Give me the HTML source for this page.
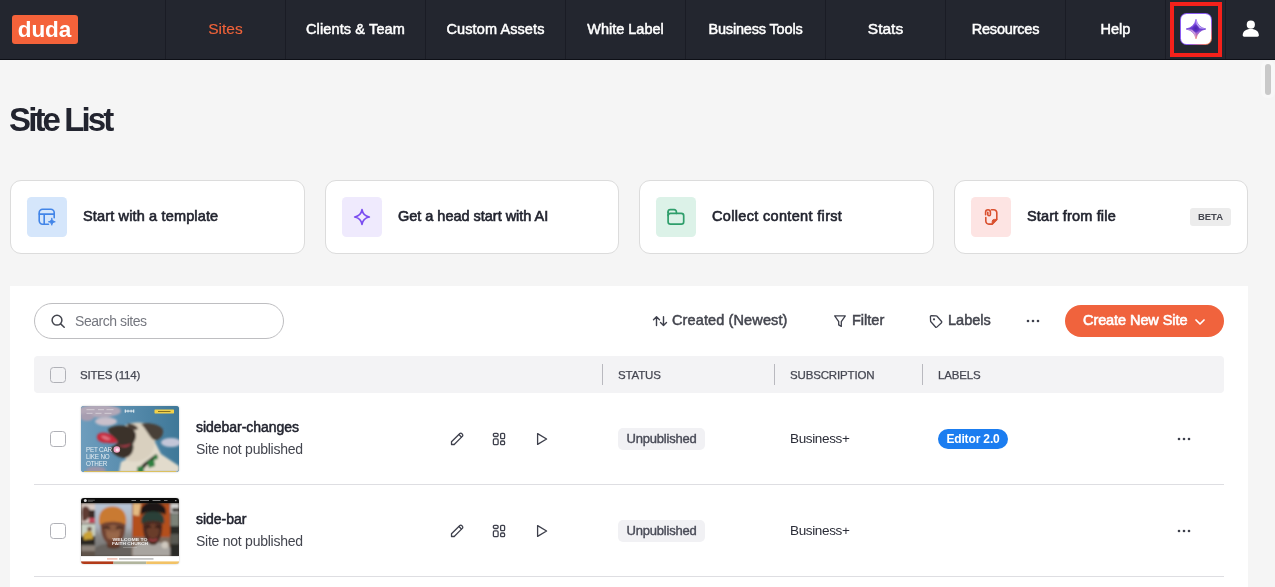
<!DOCTYPE html>
<html lang="en">
<head>
<meta charset="utf-8">
<title>Site List</title>
<style>
*{box-sizing:border-box;margin:0;padding:0}
html,body{width:1275px;height:587px;overflow:hidden;background:#f5f5f5;font-family:"Liberation Sans",sans-serif;color:#22242f}
.ni,.tx,h1,.logo,.beta,.search span,.tb,.create,.th,.name,.sub,.badge,.plan,.ed{will-change:transform}
/* NAV */
#nav{position:absolute;left:0;top:0;width:1275px;height:60px;background:#23262f;border-bottom:1px solid #0d0f16}
.logo{position:absolute;left:12px;top:15px;width:66px;height:29px;background:#f4623a;border-radius:3px;color:#fff;font-weight:bold;font-size:22.5px;line-height:29.5px;text-align:center;letter-spacing:-.1px;text-indent:-1px}
.nd{position:absolute;top:0;width:1px;height:59px;background:#1a1c25}
.ni{position:absolute;top:0;height:59px;line-height:58.600px;text-align:center;color:#fff;font-size:14.5px;font-weight:normal;-webkit-text-stroke:.5px #fff;white-space:nowrap}
.ni.act{color:#f0633a;font-weight:normal;font-size:15.500px;-webkit-text-stroke:.15px #f0633a;line-height:58.200px}
.redbox{position:absolute;left:1170px;top:2px;width:52px;height:55px;border:4px solid #f5211b}
.aibtn{position:absolute;left:1180.300px;top:13.200px;width:31.400px;height:31.600px;border-radius:6.500px;background:linear-gradient(135deg,#8b5cf2 0%,#8b5cf2 62%,#f07e5a 92%)}.aibtn i{position:absolute;left:1px;top:1px;right:1px;bottom:1px;background:#fff;border-radius:5.500px}
/* TITLE */
h1{position:absolute;left:9.2px;top:100.7px;font-size:33px;line-height:38px;font-weight:bold;letter-spacing:-2.88px;color:#22242f;white-space:nowrap}
/* CARDS */
.card{position:absolute;top:180px;height:74px;width:295px;background:#fff;border:1px solid #dcdcdc;border-radius:11px}
.card .ic{position:absolute;left:16px;top:16px;width:40px;height:40px;border-radius:4.500px}
.card .tx{position:absolute;left:72px;top:0;line-height:70.400px;font-size:14.500px;font-weight:normal;-webkit-text-stroke:.6px #22242f;color:#22242f;white-space:nowrap}
.beta{position:absolute;left:235px;top:27px;width:41px;height:18px;background:#ececec;border-radius:3px;font-size:9.500px;font-weight:bold;line-height:17.300px;text-align:center;color:#44464f}
/* PANEL */
#panel{position:absolute;left:10px;top:286px;width:1238px;height:310px;background:#fff}
.search{position:absolute;left:34px;top:303px;width:250px;height:36px;border:1px solid #bebec1;border-radius:18px;background:#fff}
.search span{position:absolute;left:40px;top:0;line-height:35px;font-size:14px;letter-spacing:-.45px;color:#75777f;white-space:nowrap}
.tb{position:absolute;top:305px;height:32px;line-height:31px;font-size:14.5px;color:#44464f;-webkit-text-stroke:.5px #44464f;white-space:nowrap}
.create{position:absolute;left:1065px;top:305px;width:159px;height:32px;border-radius:16px;background:#f0633d;color:#fff;font-size:14.500px;font-weight:normal;-webkit-text-stroke:.6px #fff;line-height:31px;letter-spacing:-.08px;white-space:nowrap}
.create span{position:absolute;left:18px;top:-.1px}
.thead{position:absolute;left:34px;top:356px;width:1190px;height:37px;background:#f3f3f5;border-radius:4px}
.th{position:absolute;top:356px;height:36px;line-height:38px;font-size:11.5px;letter-spacing:-.15px;color:#454752;-webkit-text-stroke:.25px #454752;white-space:nowrap}
.vd{position:absolute;top:364px;width:1px;height:21px;background:#b9b9bf}
.cb{position:absolute;left:50px;width:16px;height:16px;border:1px solid #b0b1b7;border-radius:3.500px;background:#fff}
.rowline{position:absolute;left:34px;width:1190px;height:1px;background:#dedee2}
.thumb{will-change:transform;position:absolute;left:81px;width:98px;height:66px;border-radius:3px;overflow:hidden;box-shadow:0 0 2px rgba(0,0,0,.25)}
.name{position:absolute;left:196px;font-size:14px;letter-spacing:-.03px;font-weight:normal;-webkit-text-stroke:.5px #22242f;color:#22242f;white-space:nowrap;line-height:18px}
.sub{position:absolute;left:196px;font-size:14px;letter-spacing:-.25px;color:#44464f;white-space:nowrap;line-height:18px}
.badge{position:absolute;left:618px;width:87px;height:22px;background:#f1f1f4;border-radius:5px;font-size:13px;font-weight:normal;-webkit-text-stroke:.4px #4a4c58;color:#4a4c58;text-align:center;line-height:21.800px;letter-spacing:-.2px;white-space:nowrap}
.plan{position:absolute;left:790px;font-size:13.5px;letter-spacing:-.35px;color:#2a2c37;line-height:18px;white-space:nowrap}
.ed{position:absolute;left:938px;width:70px;height:20px;border-radius:10px;background:#1b7df0;color:#fff;font-size:12px;font-weight:bold;text-align:center;line-height:20px;letter-spacing:-.15px;white-space:nowrap}
svg{position:absolute;overflow:visible}
.scroll{position:absolute;left:1265px;top:64px;width:6px;height:31px;border-radius:3px;background:#c9c9c9}
</style>
</head>
<body>
<div id="nav">
  <div class="logo">duda</div>
  <div class="nd" style="left:165px"></div>
  <div class="nd" style="left:285px"></div>
  <div class="nd" style="left:425px"></div>
  <div class="nd" style="left:565px"></div>
  <div class="nd" style="left:685px"></div>
  <div class="nd" style="left:825px"></div>
  <div class="nd" style="left:945px"></div>
  <div class="nd" style="left:1065px"></div>
  <div class="nd" style="left:1165px"></div>
  <div class="nd" style="left:1225px"></div>
  <div class="ni act" style="left:166px;width:119px">Sites</div>
  <div class="ni" style="left:286px;width:139px;letter-spacing:.13px">Clients &amp; Team</div>
  <div class="ni" style="left:426px;width:139px;letter-spacing:.1px">Custom Assets</div>
  <div class="ni" style="left:566px;width:119px">White Label</div>
  <div class="ni" style="left:686px;width:139px;letter-spacing:-.17px">Business Tools</div>
  <div class="ni" style="left:826px;width:119px;font-size:15.500px;line-height:58px">Stats</div>
  <div class="ni" style="left:946px;width:119px;letter-spacing:-.2px">Resources</div>
  <div class="ni" style="left:1066px;width:99px">Help</div>
  <div class="redbox"></div>
  <div class="aibtn"><i></i>
    <svg width="20" height="20" viewBox="0 0 20 20" style="left:5.600px;top:5.600px"><defs><linearGradient id="g1" x1="0" y1="0" x2="0" y2="1"><stop offset="0" stop-color="#9a6af5"/><stop offset=".5" stop-color="#6a3ad2"/><stop offset=".68" stop-color="#9a62d8"/><stop offset="1" stop-color="#f58472"/></linearGradient><radialGradient id="g2" cx=".5" cy=".5" r=".5"><stop offset="0" stop-color="#4a22b0"/><stop offset=".6" stop-color="#5a2dc0" stop-opacity=".8"/><stop offset="1" stop-color="#5a2dc0" stop-opacity="0"/></radialGradient></defs><path d="M10 .2Q11.600 8.400 19.800 10Q11.600 11.600 10 19.800Q8.400 11.600 .2 10Q8.400 8.400 10 .2Z" fill="url(#g1)" stroke="url(#g1)" stroke-width=".8" stroke-linejoin="round"/><path d="M10 .2Q11.600 8.400 19.800 10L12.500 9.200L10.600 6Z" fill="#cbb6fa" opacity=".9"/><path d="M.2 10Q8.400 11.600 10 19.800L9.300 13L7 10.800Z" fill="#d9b0e4" opacity=".75"/><path d="M10 4.500L14.500 10L10 14.500L5 10Z" fill="url(#g2)"/></svg>
  </div>
  <svg width="18" height="18" viewBox="0 0 18 18" style="left:1242px;top:20px"><circle cx="8.800" cy="4.700" r="4.100" fill="#fff"/><path d="M.700 15.300C.700 11.200 3.800 8.900 8.800 8.900s8.100 2.300 8.100 6.400c0 .9-.600 1.400-1.500 1.400H2.200c-.900 0-1.500-.500-1.500-1.400z" fill="#fff"/></svg>
</div>
<div style="position:absolute;left:1261px;top:61px;width:14px;height:37px;border-radius:6px;background:#f8f8f8"></div><div class="scroll"></div>

<h1>Site List</h1>

<div class="card" style="left:10px"><div class="ic" style="background:#d5e6fb"><svg width="40" height="40" viewBox="0 0 40 40" style="left:0;top:0" fill="none" stroke="#4285e8" stroke-width="1.6" stroke-linecap="round" stroke-linejoin="round"><path d="M21.5 27.2H15.6a3.4 3.4 0 0 1-3.4-3.4V15.6a3.4 3.4 0 0 1 3.4-3.4h8.2a3.4 3.4 0 0 1 3.4 3.4v5.2"/><path d="M12.2 17.100H27.2M17.2 17.100V27.2"/><path d="M24.8 21.3c.3 2 1.400 3.100 3.500 3.500c-2.100 .4-3.200 1.500-3.500 3.500c-.3-2-1.400-3.100-3.500-3.500c2.100-.4 3.200-1.500 3.500-3.500z" fill="#4285e8" stroke-width=".8"/></svg></div><div class="tx" style="letter-spacing:.15px">Start with a template</div></div>
<div class="card" style="left:325px;width:294px"><div class="ic" style="background:#efeafd"><svg width="40" height="40" viewBox="0 0 40 40" style="left:0;top:0" fill="none" stroke="#7a4cf0" stroke-width="1.7" stroke-linejoin="round"><path d="M20 12.700c.7 4.300 2.700 6.400 7.300 7.300c-4.600 .9-6.600 3-7.300 7.300c-.7-4.300-2.700-6.400-7.300-7.300c4.600-.9 6.600-3 7.300-7.300z"/></svg></div><div class="tx" style="letter-spacing:-.02px">Get a head start with AI</div></div>
<div class="card" style="left:639px"><div class="ic" style="background:#dcf2e8"><svg width="40" height="40" viewBox="0 0 40 40" style="left:0;top:0" fill="none" stroke="#2e9e6b" stroke-width="1.7" stroke-linejoin="round" stroke-linecap="round"><path d="M12.100 15.200v-.3a2.200 2.200 0 0 1 2.200-2.200h3.900a2.200 2.200 0 0 1 2.200 2.200v1.400"/><rect x="12.100" y="16.300" width="15.600" height="10.900" rx="2.400"/><path d="M12.100 18.500V15"/></svg></div><div class="tx" style="letter-spacing:.33px">Collect content first</div></div>
<div class="card" style="left:954px;width:294px"><div class="ic" style="background:#fde4e3"><svg width="40" height="40" viewBox="0 0 40 40" style="left:0;top:0" fill="none" stroke="#d9502f" stroke-width="1.6" stroke-linejoin="round" stroke-linecap="round"><path d="M20.500 12.700h2.300a3 3 0 0 1 3 3v6.800l-4.600 4.600h-3.400a3 3 0 0 1-3-3v-3.600"/><path d="M25.600 22.400h-2.200a2.200 2.200 0 0 0-2.200 2.200v2.300z" fill="#d9502f" stroke-width="1"/><path d="M14.600 17.800v-2.600a2.400 2.400 0 0 1 4.800 0v2.200a1.300 1.300 0 0 1-2.600 0v-2.200"/></svg></div><div class="tx" style="letter-spacing:.18px">Start from file</div><div class="beta">BETA</div></div>

<div id="panel"></div>
<div class="search"><span>Search sites</span></div>
<div class="tb" style="left:671.700px;letter-spacing:.12px">Created (Newest)</div>
<div class="tb" style="left:851.700px">Filter</div>
<div class="tb" style="left:947.900px">Labels</div>
<div class="create"><span>Create New Site</span></div>


<svg width="16" height="16" viewBox="0 0 16 16" style="left:50px;top:313px" fill="none" stroke="#44464f" stroke-width="1.5" stroke-linecap="round"><circle cx="7" cy="7.200" r="4.900"/><path d="M10.700 10.900L14.200 14.200"/></svg>
<svg width="16" height="12" viewBox="0 0 16 12" style="left:652px;top:315px" fill="none" stroke="#3e404c" stroke-width="1.400" stroke-linecap="round" stroke-linejoin="round"><path d="M4.500 10.600V1.700M1.500 4.700L4.500 1.700L7.500 4.700"/><path d="M11.500 1.700V10.600M8.500 7.600L11.500 10.600L14.500 7.600"/></svg>
<svg width="14" height="14" viewBox="0 0 14 14" style="left:833px;top:314px" fill="none" stroke="#3e404c" stroke-width="1.300" stroke-linejoin="round"><path d="M1.700 1.900H12.300L8.300 7.600V12.400L5.700 10.900V7.600Z"/></svg>
<svg width="14" height="14" viewBox="0 0 14 14" style="left:929px;top:314px" fill="none" stroke="#3e404c" stroke-width="1.300" stroke-linejoin="round"><path d="M2.300 1.600L7.200 1.800a1.200 1.200 0 0 1 .8.400l4.600 5.300a.9.900 0 0 1-.1 1.200l-4.700 4.400a.9.900 0 0 1-1.300-.1L1.900 7.800a1.200 1.200 0 0 1-.3-.8L1.400 2.500a.9.900 0 0 1 .9-.9z"/><circle cx="5" cy="5.300" r="1.100" fill="#3e404c" stroke="none"/></svg>
<svg width="16" height="4" viewBox="0 0 16 4" style="left:1025px;top:318.500px"><circle cx="3" cy="2" r="1.300" fill="#3e404c"/><circle cx="8" cy="2" r="1.300" fill="#3e404c"/><circle cx="13" cy="2" r="1.300" fill="#3e404c"/></svg>
<svg width="10" height="6" viewBox="0 0 10 6" style="left:1195px;top:319px" fill="none" stroke="#fff" stroke-width="1.700" stroke-linecap="round" stroke-linejoin="round"><path d="M1 1L5 5L9 1"/></svg>
<div class="thead"></div>
<div class="cb" style="top:367px;background:transparent"></div>
<div class="th" style="left:79.500px;letter-spacing:-.22px">SITES (114)</div>
<div class="vd" style="left:602px"></div>
<div class="th" style="left:618px">STATUS</div>
<div class="vd" style="left:774px"></div>
<div class="th" style="left:790px">SUBSCRIPTION</div>
<div class="vd" style="left:922px"></div>
<div class="th" style="left:938px">LABELS</div>

<!-- row 1 -->
<div class="cb" style="top:431px"></div>
<div class="thumb" id="t1" style="top:406px;background:#5a8eae"><svg width="98" height="66" viewBox="0 0 98 66" style="left:0;top:0">
<defs>
<linearGradient id="sky" x1="0" y1="0" x2="1" y2="0"><stop offset="0" stop-color="#6e9dbd"/><stop offset=".55" stop-color="#5489aa"/><stop offset="1" stop-color="#3f7898"/></linearGradient>
<filter id="b1" x="-20%" y="-20%" width="140%" height="140%"><feGaussianBlur stdDeviation="1.1"/></filter>
<filter id="b05" x="-20%" y="-20%" width="140%" height="140%"><feGaussianBlur stdDeviation=".85"/></filter>
</defs>
<rect width="98" height="66" fill="url(#sky)"/>
<g filter="url(#b1)">
<ellipse cx="18" cy="5" rx="22" ry="6.500" fill="#b3a8b8"/>
<ellipse cx="6" cy="11" rx="7" ry="4" fill="#a79db0"/>
<ellipse cx="25" cy="15.500" rx="11" ry="4.200" fill="#c9c0cb"/>
<ellipse cx="90" cy="36.500" rx="10" ry="4.500" fill="#c3c6d8"/>
<ellipse cx="15" cy="64" rx="10" ry="3.500" fill="#9b94a9"/>
</g>
<g filter="url(#b05)">
<path d="M38 66L40 56L52 50L62 40L74 36L80 48L98 60V66Z" fill="#e2dbcc"/>
<path d="M44 20C52 15 64 16 70 20C76 26 75 40 70 48C64 56 52 57 46 54C40 50 38 28 44 20Z" fill="#d9d0bf"/>
<path d="M60 18C66 16 80 18 82 24C83 30 78 35 73 34C69 32 66 24 60 18Z" fill="#4a4037"/>
<path d="M27 23C32 19 46 18 52 23C57 28 55 33 52 38C54 44 50 51 44 52C38 52 31 48 29 42C33 40 36 38 37 36C32 30 27 28 27 23Z" fill="#3b312b"/>
<path d="M46 18C50 17 56 19 57 23C54 25 48 24 46 18Z" fill="#4a3d34"/>
<path d="M16 30C17 26 24 25 30 29C34 32 37 35 36.500 36.500C33 37.500 24 37.500 20 36C17 35 15.500 33 16 30Z" fill="#c82c3e"/>
<path d="M20 30C23 29 27 31 30 33.500C27 34.500 22 34 20 30Z" fill="#e07585"/>
<path d="M37 39C42 40 48 39 50 37C49 41 43 43 37 39Z" fill="#a83a48"/>
<path d="M57 63L63 57L75 48L77 50.500L66 59L60 66H56Z" fill="#2a2622"/>
<path d="M66 55L73 53L74 60L68 62Z" fill="#2f8040"/>
<path d="M72 50L76 48.500L77 53L73 54Z" fill="#2f8040"/>
<path d="M56 61L62 60L63 66H57Z" fill="#2f8040"/>
</g>
<circle cx="35.800" cy="43.500" r="3.300" fill="#f1a6c6"/><circle cx="36.300" cy="43.800" r="1.600" fill="#fbe6ee"/>
<g fill="#fff" opacity=".82" font-family="Liberation Sans, sans-serif" font-size="6.300" letter-spacing="-.2"><text x="5" y="46.300">PET CAR</text><text x="5" y="53">LIKE NO</text><text x="5" y="59.800">OTHER</text></g>
<g fill="#fff" opacity=".9"><rect x="43.800" y="4.600" width="9.400" height=".9"/><rect x="43.800" y="3.400" width=".9" height="3.400"/><rect x="52.300" y="3.400" width=".9" height="3.400"/><rect x="46.600" y="3.700" width=".8" height="2.800"/><rect x="49.700" y="3.700" width=".8" height="2.800"/></g>
<rect x="73.500" y="3.400" width="19.500" height="4" rx=".6" fill="#f1d04a"/><rect x="77" y="5" width="12.500" height=".8" fill="#6b5a1a"/>
<g fill="#fff" opacity=".35"><rect x="5.500" y="3" width="8" height="1.200"/><rect x="17" y="3" width="6" height="1.200"/><rect x="25.500" y="3" width="7" height="1.200"/><rect x="5.500" y="6.800" width="6" height="1.200"/><rect x="14.500" y="6.800" width="6" height="1.200"/><rect x="23.500" y="6.800" width="7" height="1.200"/></g>
<rect x="3" y="65.200" width="92" height=".8" fill="#e6c24a"/>
</svg></div>
<div class="name" style="top:418px">sidebar-changes</div>
<div class="sub" style="top:440px">Site not published</div>
<div class="badge" style="top:428px">Unpublished</div>
<div class="plan" style="top:429.800px">Business+</div>
<div class="ed" style="top:429px">Editor 2.0</div>

<svg width="14" height="14" viewBox="0 0 14 14" style="left:450px;top:432px" fill="none" stroke="#3e404c" stroke-width="1.300" stroke-linejoin="round" stroke-linecap="round"><path d="M1.500 12.500V9.800L9.600 1.700a1.600 1.600 0 0 1 2.300 0l.4.400a1.600 1.600 0 0 1 0 2.300L4.200 12.500Z"/><path d="M9 2.600L11.400 5"/></svg>
<svg width="14" height="14" viewBox="0 0 14 14" style="left:492px;top:432px" fill="none" stroke="#3e404c" stroke-width="1.300"><rect x="1.400" y="1.400" width="4.700" height="3.100" rx="1.200"/><rect x="1.400" y="6.900" width="4.700" height="5.700" rx="1.200"/><rect x="8.600" y="1.400" width="4" height="5.200" rx="1.200"/><rect x="8.600" y="9" width="4" height="3.600" rx="1.200"/></svg>
<svg width="12" height="14" viewBox="0 0 12 14" style="left:536px;top:432px" fill="none" stroke="#3e404c" stroke-width="1.300" stroke-linejoin="round"><path d="M1.600 1.600V12.400L10.600 7Z"/></svg>
<svg width="16" height="4" viewBox="0 0 16 4" style="left:1176px;top:437px"><circle cx="3" cy="2" r="1.300" fill="#3e404c"/><circle cx="8" cy="2" r="1.300" fill="#3e404c"/><circle cx="13" cy="2" r="1.300" fill="#3e404c"/></svg>
<div class="rowline" style="top:484px"></div>
<!-- row 2 -->
<div class="cb" style="top:523px"></div>
<div class="thumb" id="t2" style="top:498px;background:#555"><svg width="98" height="66" viewBox="0 0 98 66" style="left:0;top:0">
<defs><linearGradient id="mbg" x1="0" y1="0" x2="0" y2="1"><stop offset="0" stop-color="#b9c7d9"/><stop offset=".45" stop-color="#a9b0ba"/><stop offset=".6" stop-color="#8a8a8a"/><stop offset="1" stop-color="#6c6a66"/></linearGradient></defs>
<rect width="98" height="66" fill="#fff"/>
<rect y="5" width="98" height="53.200" fill="#3a3430"/>
<g filter="url(#b05)">
<rect x="0" y="5.300" width="14" height="20" fill="#d9cbc4"/>
<path d="M2 9C5 7 9 9 9 14C9 19 6 24 1.500 23C1 18 0 12 2 9Z" fill="#5e3a30"/>
<rect x="8" y="12" width="6" height="9" fill="#3a2c28"/>
<rect x="8" y="20" width="6" height="5" fill="#c04a5a"/>
<rect x="0" y="26" width="14" height="21.500" fill="#c9d2c4"/>
<rect x="0" y="38" width="14" height="9.500" fill="#2a2622"/>
<path d="M2 36L7 33L11.500 34L12 41L3 42Z" fill="#c9a236"/>
<circle cx="8.500" cy="31" r="2.300" fill="#6a4a38"/>
<rect x="0" y="47.500" width="14" height="10.700" fill="#8d837a"/>
<rect x="0" y="53" width="14" height="5.200" fill="#5e5348"/>
<rect x="14" y="5.300" width="37.400" height="52.900" fill="url(#mbg)"/>
<path d="M14 58.200V50C20 46 26 45.500 30 45L38 46C44 47 50 49 51.400 51V58.200Z" fill="#68635e"/>
<path d="M26 40H39V49C35 51 30 51 26 49Z" fill="#5a3426"/>
<path d="M19.500 24C19 34 22 42 27 46C30 48.500 35 48.500 38 46C43 41 45 33 44.500 24C40 21 24 21 19.500 24Z" fill="#6e4231"/>
<ellipse cx="32" cy="35" rx="7" ry="8" fill="#99684a"/><ellipse cx="32" cy="31" rx="9" ry="3" fill="#8a5a40"/><path d="M22.500 30.500C24 29.500 27 29.500 29 30.500M35 30.500C37 29.500 40 29.500 41.500 30.500" stroke="#2e1a14" stroke-width="1.500" fill="none"/><path d="M28 41.500C30 42.500 34 42.500 36 41.500" stroke="#5a2c24" stroke-width="1.300" fill="none"/>
<path d="M18.500 27C16 14 23 8.500 31.500 8.500C40 8.500 47 14 45 27C40 22.500 24 22.500 18.500 27Z" fill="#c97a33"/>
<rect x="51.400" y="5.300" width="38" height="52.900" fill="#b4501f"/>
<path d="M52 5.300H60L58 18L52 17Z" fill="#e3ba82"/>
<rect x="51.400" y="39" width="38" height="19.200" fill="#7e6a5c"/>
<path d="M51.400 58.200V50C56 46 62 45 66 44L76 44C82 45 87 47 89.400 50V58.200Z" fill="#a9a5a0"/>
<circle cx="84" cy="47" r="3.500" fill="#cfc8be"/>
<path d="M62 24C61 34 64 42 68 45.500C70.500 47.500 73.500 47.500 76 45.500C80 41 82 33 81 24C78 21 65 21 62 24Z" fill="#4b2a20"/>
<ellipse cx="72" cy="33" rx="6" ry="7.500" fill="#6b3d2c"/><path d="M65 29.500C66.500 28.500 69 28.500 70 29.500M74 29.500C75.500 28.500 78 28.500 79 29.500" stroke="#1e100c" stroke-width="1.400" fill="none"/><path d="M68 41C70 43 74 43 76 41" stroke="#b8444e" stroke-width="1.700" fill="none"/>
<path d="M60 17C58 8 64 4.500 72 4.500C80 4.500 87 8 84.500 17C80 13 64 13 60 17Z" fill="#1b1715"/>
<path d="M60.500 26C59 17 64 13.500 72 13.500C80 13.500 84.500 17 83 26C79 21.500 65 21.500 60.500 26Z" fill="#2b4138"/>
<rect x="89.400" y="5.300" width="8.600" height="52.900" fill="#2b2a27"/>
<rect x="89.400" y="5.300" width="8.600" height="10" fill="#d3d3d1"/>
<rect x="91" y="10" width="7" height="4" fill="#3d3a36"/>
<rect x="89.400" y="16" width="8.600" height="12" fill="#7b8278"/>
<rect x="89.400" y="36" width="8.600" height="10" fill="#5a5a52"/>
</g>
<rect width="98" height="5" fill="#0b0b0b"/>
<circle cx="4.300" cy="2.600" r="1.500" fill="#d8d8d8"/><rect x="6.800" y="1.800" width="7" height=".7" fill="#888"/><rect x="6.800" y="3" width="5" height=".6" fill="#666"/>
<g fill="#9a9a9a"><rect x="50.500" y="2.200" width="4.500" height=".8"/><rect x="59" y="2.200" width="9" height=".8"/><rect x="71.500" y="2.200" width="8" height=".8"/><rect x="83" y="2.200" width="3.500" height=".8"/><rect x="94" y="2" width="1.500" height="1.200"/></g>
<g fill="#fff" opacity=".88" font-family="Liberation Sans, sans-serif" font-weight="bold" font-size="3.900" text-anchor="middle"><text x="49" y="42.700" textLength="35" lengthAdjust="spacingAndGlyphs">WELCOME TO</text><text x="49" y="46.900" textLength="36" lengthAdjust="spacingAndGlyphs">FAITH CHURCH</text></g>
<rect x="42" y="49.300" width="14" height=".6" fill="#ddd" opacity=".5"/>
<rect y="58.200" width="98" height="5.200" fill="#fff"/>
<rect x="26" y="60.500" width="10.500" height=".9" fill="#e0907a"/><rect x="38" y="60.500" width="34.500" height=".9" fill="#8a8a8a"/>
<rect y="63.400" width="32.500" height="2.600" fill="#b23a18"/><rect x="32.500" y="63.400" width="32.700" height="2.600" fill="#b1b59d"/><rect x="65.200" y="63.400" width="32.800" height="2.600" fill="#f2c265"/>
</svg></div>
<div class="name" style="top:510px">side-bar</div>
<div class="sub" style="top:532px">Site not published</div>
<div class="badge" style="top:520px">Unpublished</div>
<div class="plan" style="top:521.800px">Business+</div>

<svg width="14" height="14" viewBox="0 0 14 14" style="left:450px;top:524px" fill="none" stroke="#3e404c" stroke-width="1.300" stroke-linejoin="round" stroke-linecap="round"><path d="M1.500 12.500V9.800L9.600 1.700a1.600 1.600 0 0 1 2.300 0l.4.400a1.600 1.600 0 0 1 0 2.300L4.200 12.500Z"/><path d="M9 2.600L11.400 5"/></svg>
<svg width="14" height="14" viewBox="0 0 14 14" style="left:492px;top:524px" fill="none" stroke="#3e404c" stroke-width="1.300"><rect x="1.400" y="1.400" width="4.700" height="3.100" rx="1.200"/><rect x="1.400" y="6.900" width="4.700" height="5.700" rx="1.200"/><rect x="8.600" y="1.400" width="4" height="5.200" rx="1.200"/><rect x="8.600" y="9" width="4" height="3.600" rx="1.200"/></svg>
<svg width="12" height="14" viewBox="0 0 12 14" style="left:536px;top:524px" fill="none" stroke="#3e404c" stroke-width="1.300" stroke-linejoin="round"><path d="M1.600 1.600V12.400L10.600 7Z"/></svg>
<svg width="16" height="4" viewBox="0 0 16 4" style="left:1176px;top:529px"><circle cx="3" cy="2" r="1.300" fill="#3e404c"/><circle cx="8" cy="2" r="1.300" fill="#3e404c"/><circle cx="13" cy="2" r="1.300" fill="#3e404c"/></svg>
<div class="rowline" style="top:576px"></div>
</body>
</html>
